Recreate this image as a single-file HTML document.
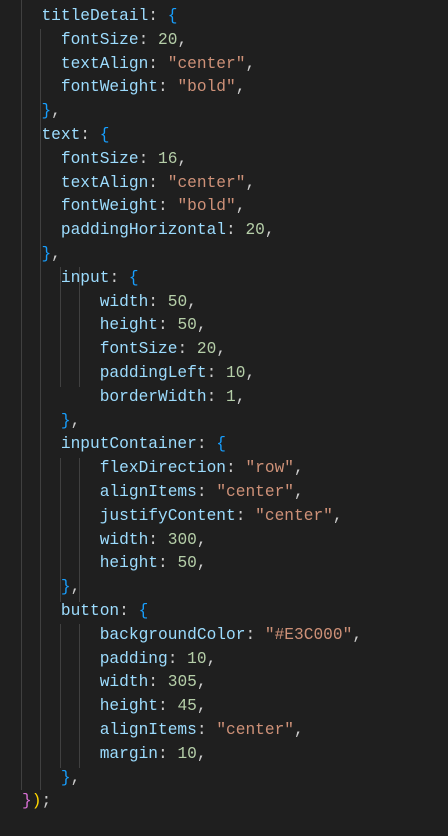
<!DOCTYPE html>
<html><head><meta charset="utf-8"><style>
html,body{margin:0;padding:0;background:#1f1f1f;width:448px;height:836px;overflow:hidden}
pre{margin:0;position:absolute;left:22px;top:5px;font-family:"Liberation Mono",monospace;font-size:16.2px;line-height:23.8px;color:#cccccc}
.p{color:#9cdcfe}.s{color:#ce9178}.n{color:#b5cea8}.b{color:#179fff}.m{color:#da70d6}.y{color:#ffd700}
.g{position:absolute;width:1px;background:#404040}
</style></head><body>
<div class="g" style="left:21px;top:0;height:790px"></div>
<div class="g" style="left:40px;top:29px;height:761px"></div>
<div class="g" style="left:60px;top:267px;height:120px"></div>
<div class="g" style="left:79px;top:267px;height:120px"></div>
<div class="g" style="left:60px;top:458px;height:144px"></div>
<div class="g" style="left:79px;top:458px;height:144px"></div>
<div class="g" style="left:60px;top:624px;height:144px"></div>
<div class="g" style="left:79px;top:624px;height:144px"></div>
<pre>  <span class="p">titleDetail</span>: <span class="b">{</span>
    <span class="p">fontSize</span>: <span class="n">20</span>,
    <span class="p">textAlign</span>: <span class="s">"center"</span>,
    <span class="p">fontWeight</span>: <span class="s">"bold"</span>,
  <span class="b">}</span>,
  <span class="p">text</span>: <span class="b">{</span>
    <span class="p">fontSize</span>: <span class="n">16</span>,
    <span class="p">textAlign</span>: <span class="s">"center"</span>,
    <span class="p">fontWeight</span>: <span class="s">"bold"</span>,
    <span class="p">paddingHorizontal</span>: <span class="n">20</span>,
  <span class="b">}</span>,
    <span class="p">input</span>: <span class="b">{</span>
        <span class="p">width</span>: <span class="n">50</span>,
        <span class="p">height</span>: <span class="n">50</span>,
        <span class="p">fontSize</span>: <span class="n">20</span>,
        <span class="p">paddingLeft</span>: <span class="n">10</span>,
        <span class="p">borderWidth</span>: <span class="n">1</span>,
    <span class="b">}</span>,
    <span class="p">inputContainer</span>: <span class="b">{</span>
        <span class="p">flexDirection</span>: <span class="s">"row"</span>,
        <span class="p">alignItems</span>: <span class="s">"center"</span>,
        <span class="p">justifyContent</span>: <span class="s">"center"</span>,
        <span class="p">width</span>: <span class="n">300</span>,
        <span class="p">height</span>: <span class="n">50</span>,
    <span class="b">}</span>,
    <span class="p">button</span>: <span class="b">{</span>
        <span class="p">backgroundColor</span>: <span class="s">"#E3C000"</span>,
        <span class="p">padding</span>: <span class="n">10</span>,
        <span class="p">width</span>: <span class="n">305</span>,
        <span class="p">height</span>: <span class="n">45</span>,
        <span class="p">alignItems</span>: <span class="s">"center"</span>,
        <span class="p">margin</span>: <span class="n">10</span>,
    <span class="b">}</span>,
<span class="m">}</span><span class="y">)</span>;</pre>
</body></html>
